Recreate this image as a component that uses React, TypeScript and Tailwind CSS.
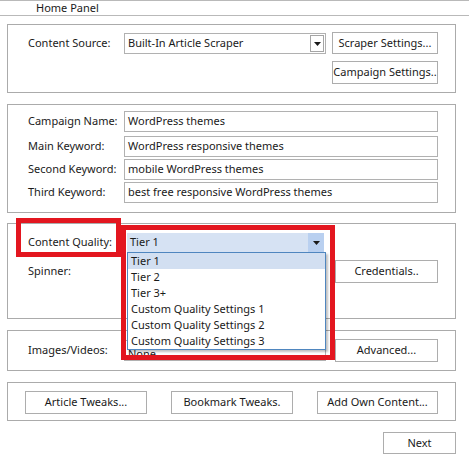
import React from "react";

function Arrow() {
  return (
    <svg width="7" height="4" viewBox="0 0 7 4" className="block">
      <path d="M0 0h7L3.5 4z" fill="#1a1a1a" />
    </svg>
  );
}

function Btn({ label, className }: { label: string; className: string }) {
  return (
    <div
      className={
        "flex items-center justify-center whitespace-nowrap border border-[#adadad] bg-white text-[#1a1a1a] " +
        className
      }
    >
      {label}
    </div>
  );
}

function TextBox({ value, className }: { value: string; className: string }) {
  return (
    <div
      className={
        "flex items-center whitespace-nowrap border border-[#b1b1b1] bg-white pl-[3px] " + className
      }
    >
      {value}
    </div>
  );
}

const tiers = [
  "Tier 1",
  "Tier 2",
  "Tier 3+",
  "Custom Quality Settings 1",
  "Custom Quality Settings 2",
  "Custom Quality Settings 3",
];

export default function App() {
  return (
    <div className="relative h-[456px] w-[469px] overflow-hidden bg-white font-['Noto_Sans','Open_Sans',sans-serif] text-[11px] text-[#1a1a1a]">
      {/* tab header */}
      <div className="h-[16px] border-y border-[#b9b9b9] pl-[36px] leading-[14px]">
        Home Panel
      </div>

      {/* content source */}
      <div className="ml-[7px] mt-[8px] flex h-[69px] w-[449px] border border-[#ababab] pl-[20px] pt-[7px]">
        <div className="flex h-[23px] w-[96px] items-center">Content Source:</div>
        <div className="mt-[1px] flex h-[21px] w-[202px] items-center justify-between border border-[#b1b1b1] pl-[3px]">
          <span>Built-In Article Scraper</span>
          <div className="mr-[1px] flex h-[17px] w-[14px] items-center justify-center border border-[#a5a5a5]">
            <Arrow />
          </div>
        </div>
        <div className="ml-[6px] flex flex-col gap-[7px]">
          <Btn label="Scraper Settings..." className="h-[22px] w-[106px]" />
          <Btn label="Campaign Settings.." className="h-[23px] w-[106px]" />
        </div>
      </div>

      {/* campaign + keywords */}
      <div className="ml-[7px] mt-[11px] flex h-[109px] w-[449px] flex-col border border-[#ababab] pl-[20px] pt-[6px]">
        <div className="flex h-[21px]">
          <div className="flex w-[96px] items-center">Campaign Name:</div>
          <TextBox value="WordPress themes" className="w-[314px]" />
        </div>
        <div className="mt-[4px] flex h-[21px]">
          <div className="flex w-[96px] items-center">Main Keyword:</div>
          <TextBox value="WordPress responsive themes" className="w-[314px]" />
        </div>
        <div className="mt-[2px] flex h-[21px]">
          <div className="flex w-[96px] items-center">Second Keyword:</div>
          <TextBox value="mobile WordPress themes" className="w-[314px]" />
        </div>
        <div className="mt-[2px] flex h-[21px]">
          <div className="flex w-[96px] items-center">Third Keyword:</div>
          <TextBox value="best free responsive WordPress themes" className="w-[314px]" />
        </div>
      </div>

      {/* quality + spinner */}
      <div className="ml-[7px] mt-[10px] flex h-[96px] w-[449px] flex-col border border-[#ababab] pl-[20px] pt-[9px]">
        <div className="flex h-[19px]">
          <div className="flex w-[99px] items-center">Content Quality:</div>
          <div className="flex w-[197px] items-center justify-between bg-[#d6e2f3] pl-[3px]">
            <span>Tier 1</span>
            <div className="flex h-[19px] w-[16px] items-center justify-center bg-[#b9d0f0]">
              <Arrow />
            </div>
          </div>
        </div>
        <div className="mt-[8px] flex h-[23px]">
          <div className="flex w-[99px] items-center">Spinner:</div>
          <div className="w-[208px]" />
          <Btn label="Credentials.." className="w-[103px]" />
        </div>
      </div>

      {/* media */}
      <div className="ml-[7px] mt-[11px] flex h-[41px] w-[449px] border border-[#ababab] pl-[20px] pt-[8px]">
        <div className="flex h-[22px] w-[96px] items-center">Images/Videos:</div>
        <div className="mt-[1px] flex h-[21px] w-[202px] items-end justify-between overflow-hidden border border-[#b1b1b1] pl-[3px]">
          <span className="leading-[13px]">None</span>
        </div>
        <Btn label="Advanced..." className="ml-[9px] h-[23px] w-[103px]" />
      </div>

      {/* tweak buttons */}
      <div className="ml-[7px] mt-[11px] flex h-[39px] w-[449px] gap-[24px] border border-[#ababab] pl-[17px] pt-[8px]">
        <Btn label="Article Tweaks..." className="h-[23px] w-[122px]" />
        <Btn label="Bookmark Tweaks." className="h-[23px] w-[122px]" />
        <Btn label="Add Own Content..." className="h-[23px] w-[121px]" />
      </div>

      <div className="ml-[383px] mt-[11px]">
        <Btn label="Next" className="h-[22px] w-[73px]" />
      </div>

      {/* highlight frames */}
      <div className="absolute left-[16px] top-[218px] h-[39px] w-[105px] border-[5px] border-[#e3161f]" />
      <div className="absolute left-[121px] top-[225px] h-[135px] w-[214px] border-[5px] border-[#e3161f]" />

      {/* open dropdown list */}
      <div className="absolute left-[127px] top-[252px] flex h-[98px] w-[199px] flex-col border border-[#4f86bf] bg-white shadow-[2px_2px_2px_rgba(0,0,0,0.25)]">
        {tiers.map((t, i) => (
          <div
            key={t}
            className={
              "flex h-[16px] items-center pl-[3px] " + (i === 0 ? "bg-[#d2dff1]" : "")
            }
          >
            {t}
          </div>
        ))}
      </div>
    </div>
  );
}
